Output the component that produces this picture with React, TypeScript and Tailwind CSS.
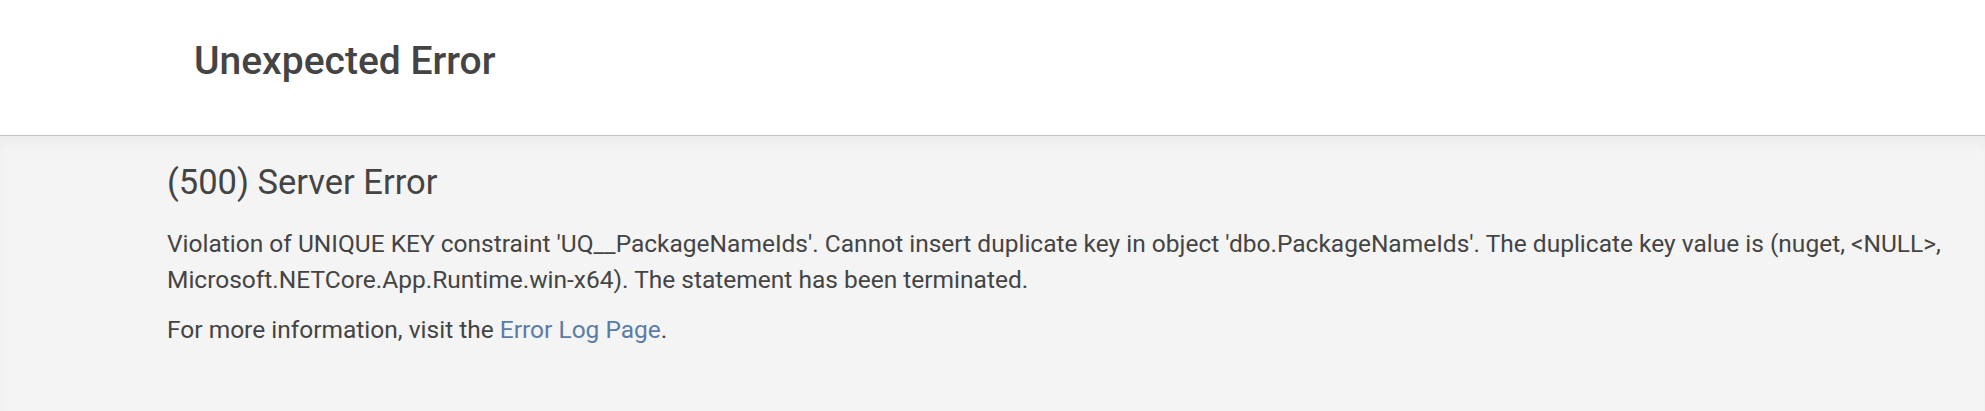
import React from "react";

export default function App() {
  return (
    <div
      className="min-h-screen flex flex-col bg-[#f4f4f4] text-[#444444]"
      style={{ fontFamily: "Roboto, 'Noto Sans', Arial, sans-serif" }}
    >
      <header className="h-[136px] bg-white border-b border-[#c2c2c2] pl-[194px] pt-[42px]">
        <h1 className="text-[39px] leading-[39px] font-medium text-[#444444]">Unexpected Error</h1>
      </header>
      <main className="flex-1 bg-[#f4f4f4] shadow-[inset_0_10px_18px_-10px_rgba(0,0,0,0.07)] pl-[167px] pr-[30px] pt-[29px]">
        <h2 className="text-[34.5px] leading-[34px] font-normal">(500) Server Error</h2>
        <p className="mt-[27px] text-[24.5px] leading-[36px]">
          Violation of UNIQUE KEY constraint 'UQ__PackageNameIds'. Cannot insert duplicate key in object
          'dbo.PackageNameIds'. The duplicate key value is (nuget, &lt;NULL&gt;, Microsoft.NETCore.App.Runtime.win-x64).
          The statement has been terminated.
        </p>
        <p className="mt-[14px] text-[24.5px] leading-[36px]">
          For more information, visit the{" "}
          <a href="#" className="text-[#5b7ca6] no-underline">
            Error Log Page
          </a>
          .
        </p>
      </main>
    </div>
  );
}
